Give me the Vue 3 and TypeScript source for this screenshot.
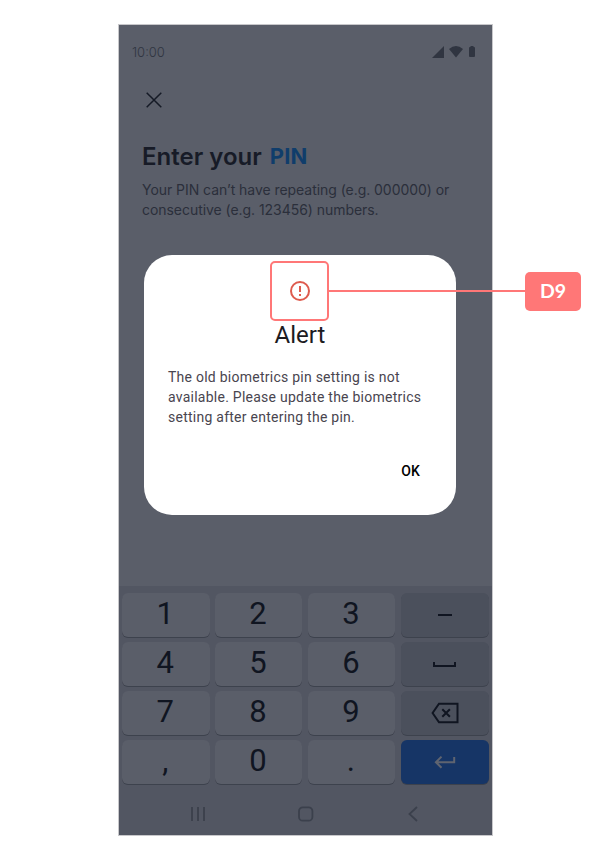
<script setup lang="ts">
interface Key {
  id: string
  label?: string
  kind: 'digit' | 'fn' | 'enter'
}

const keys: Key[] = [
  { id: '1', label: '1', kind: 'digit' },
  { id: '2', label: '2', kind: 'digit' },
  { id: '3', label: '3', kind: 'digit' },
  { id: 'dash', kind: 'fn' },
  { id: '4', label: '4', kind: 'digit' },
  { id: '5', label: '5', kind: 'digit' },
  { id: '6', label: '6', kind: 'digit' },
  { id: 'space', kind: 'fn' },
  { id: '7', label: '7', kind: 'digit' },
  { id: '8', label: '8', kind: 'digit' },
  { id: '9', label: '9', kind: 'digit' },
  { id: 'delete', kind: 'fn' },
  { id: 'comma', label: ',', kind: 'digit' },
  { id: '0', label: '0', kind: 'digit' },
  { id: 'period', label: '.', kind: 'digit' },
  { id: 'enter', kind: 'enter' },
]
</script>

<template>
  <div class="board">
    <main class="phone">
      <header class="status">
        <span class="time">10:00</span>
        <div class="indicators">
          <svg width="12" height="12" viewBox="0 0 12 12"><path d="M12 0v12H0z" /></svg>
          <svg width="14" height="12" viewBox="0 0 14 12"><path d="M0 3Q7-3 14 3L7 11.5z" /></svg>
          <svg width="6" height="12" viewBox="0 0 6 12"><path d="M1.5 1V0h3v1H5q1 0 1 1v8q0 1-1 1H1q-1 0-1-1V2q0-1 1-1z" /></svg>
        </div>
      </header>

      <button class="close" aria-label="Close">
        <svg width="16" height="16" viewBox="0 0 16 16"><path d="M.7.7l14.6 14.6M15.3.7L.7 15.3" /></svg>
      </button>

      <section class="intro">
        <h1>Enter your <span class="pin">PIN</span></h1>
        <p>Your PIN can’t have repeating (e.g. 000000) or<br />consecutive (e.g. 123456) numbers.</p>
      </section>

      <section class="keyboard">
        <div class="keys">
          <button v-for="key in keys" :key="key.id" class="key" :class="[key.kind, key.id]">
            <template v-if="key.label">{{ key.label }}</template>
            <svg v-else-if="key.id === 'dash'" width="28" height="22" viewBox="0 0 28 22"><path d="M7 11h14" /></svg>
            <svg v-else-if="key.id === 'space'" width="28" height="22" viewBox="0 0 28 22"><path d="M3 9v4h21V9" /></svg>
            <svg v-else-if="key.id === 'delete'" width="28" height="22" viewBox="0 0 28 22">
              <path d="M8 1.8h18.5v18.4H8L1.6 11z M11.3 7.2l7.6 7.6M18.9 7.2l-7.6 7.6" />
            </svg>
            <svg v-else width="28" height="22" viewBox="0 0 28 22"><path d="M23.2 6v5.2H5M10.5 5.6L4.9 11.2l5.6 5.6" /></svg>
          </button>
        </div>
        <nav class="system">
          <svg width="16" height="16" viewBox="0 0 16 16"><path d="M2 1v14M8 1v14M14 1v14" /></svg>
          <svg width="16" height="16" viewBox="0 0 16 16"><rect x="1" y="1.3" width="13.4" height="13.4" rx="3.8" /></svg>
          <svg width="16" height="16" viewBox="0 0 16 16"><path d="M12 1L4.5 8l7.5 7" /></svg>
        </nav>
      </section>
    </main>

    <section class="dialog" role="alertdialog">
      <svg class="warn" width="24" height="24" viewBox="0 0 24 24">
        <circle cx="12" cy="12" r="9" />
        <path d="M12 7v6M12 15v2" />
      </svg>
      <h2>Alert</h2>
      <p>The old biometrics pin setting is not<br />available. Please update the biometrics<br />setting after entering the pin.</p>
      <button class="ok">OK</button>
    </section>

    <div class="callout">
      <div class="frame"></div>
      <div class="line"></div>
      <div class="tag">D9</div>
    </div>
  </div>
</template>

<style>
body {
  background: #fff;
}
</style>

<style scoped>
.board {
  position: relative;
  box-sizing: border-box;
  width: 608px;
  height: 860px;
  padding: 24px 0 0 118px;
  overflow: hidden;
}

button {
  padding: 0;
  border: 0;
  background: none;
}

svg {
  display: block;
  flex: none;
}

h1,
h2,
p {
  margin: 0;
}

.phone {
  box-sizing: border-box;
  display: flex;
  flex-direction: column;
  width: 375px;
  height: 812px;
  border: 1px solid #c8c8cb;
  background: #5a5e69;
}

.status {
  display: flex;
  align-items: center;
  justify-content: space-between;
  height: 54px;
  padding: 0 17px 0 13px;
}

.time {
  font: 300 13px/16px Inter, sans-serif;
  color: #303541;
}

.indicators {
  display: flex;
  gap: 5px;
  fill: #303541;
}

.indicators svg:nth-child(2) {
  margin-right: 1px;
}

.close {
  align-self: flex-start;
  margin: 13px 0 0 27px;
}

.close svg {
  fill: none;
  stroke: #151a26;
  stroke-width: 1.5;
}

.intro {
  flex: 1;
  padding: 33px 0 0 23px;
  font-family: Inter, sans-serif;
  white-space: nowrap;
}

h1 {
  display: flex;
  gap: 8px;
  font-size: 24px;
  font-weight: 600;
  line-height: 32px;
  color: #171b27;
}

.pin {
  color: #103d6b;
  font-size: 22px;
  font-weight: 700;
  line-height: 31px;
  letter-spacing: 0.2px;
}

.intro p {
  margin-top: 7px;
  font-size: 14px;
  line-height: 20px;
  letter-spacing: -0.05px;
  color: #2b2f3b;
}

.keyboard {
  height: 249px;
  background: #525662;
}

.keys {
  display: grid;
  grid-template-columns: repeat(3, 87.5px) 88px;
  grid-auto-rows: 44px;
  row-gap: 5px;
  column-gap: 5.3px;
  padding: 7px 3px 0;
}

.key {
  display: flex;
  align-items: center;
  justify-content: center;
  padding: 0 1px 2px 0;
  border-radius: 6px;
  box-shadow: 0 1px 0 #3d424d;
  background: #5a5e69;
  font: 400 31px/44px Roboto, sans-serif;
  color: #101521;
}

.key svg {
  fill: none;
  stroke: #101521;
  stroke-width: 2;
}

.key.fn,
.key.enter {
  margin: 0 -1px 0 1px;
  padding: 0;
}

.fn {
  background: #4b505c;
}

.enter {
  background: #163566;
}

.key.enter svg {
  stroke: #5f6470;
}

.system {
  display: flex;
  justify-content: space-between;
  padding: 22px 71px 0;
}

.system svg {
  fill: none;
  stroke: #3b404c;
  stroke-width: 1.8;
}

.dialog {
  position: absolute;
  left: 144px;
  top: 255px;
  box-sizing: border-box;
  display: flex;
  flex-direction: column;
  width: 312px;
  height: 260px;
  padding: 24px;
  border-radius: 28px;
  background: #fff;
  font-family: Roboto, sans-serif;
}

.warn {
  align-self: center;
  fill: none;
  stroke: #de5b4e;
  stroke-width: 2;
}

.dialog h2 {
  margin-top: 16px;
  text-align: center;
  font-size: 24px;
  font-weight: 400;
  line-height: 32px;
  color: #1c1b1f;
}

.dialog p {
  margin-top: 16px;
  font-size: 14px;
  line-height: 20px;
  letter-spacing: 0.25px;
  white-space: nowrap;
  color: #49454f;
}

.ok {
  align-self: flex-end;
  margin: 34px 12px 0 0;
  font: 500 14px/20px Roboto, sans-serif;
  letter-spacing: 0.1px;
  color: #000;
}

.callout {
  position: absolute;
  left: 270px;
  top: 261px;
  display: flex;
  align-items: center;
  width: 311px;
  height: 60px;
}

.frame {
  box-sizing: border-box;
  width: 59px;
  height: 60px;
  border: 2px solid #ff7777;
  border-radius: 5px;
}

.line {
  flex: 1;
  height: 2px;
  background: #ff7777;
}

.tag {
  width: 56px;
  height: 39px;
  border-radius: 5px;
  background: #ff7777;
  text-align: center;
  font: 700 19.5px/38px Lato, sans-serif;
  color: #fff;
}
</style>
